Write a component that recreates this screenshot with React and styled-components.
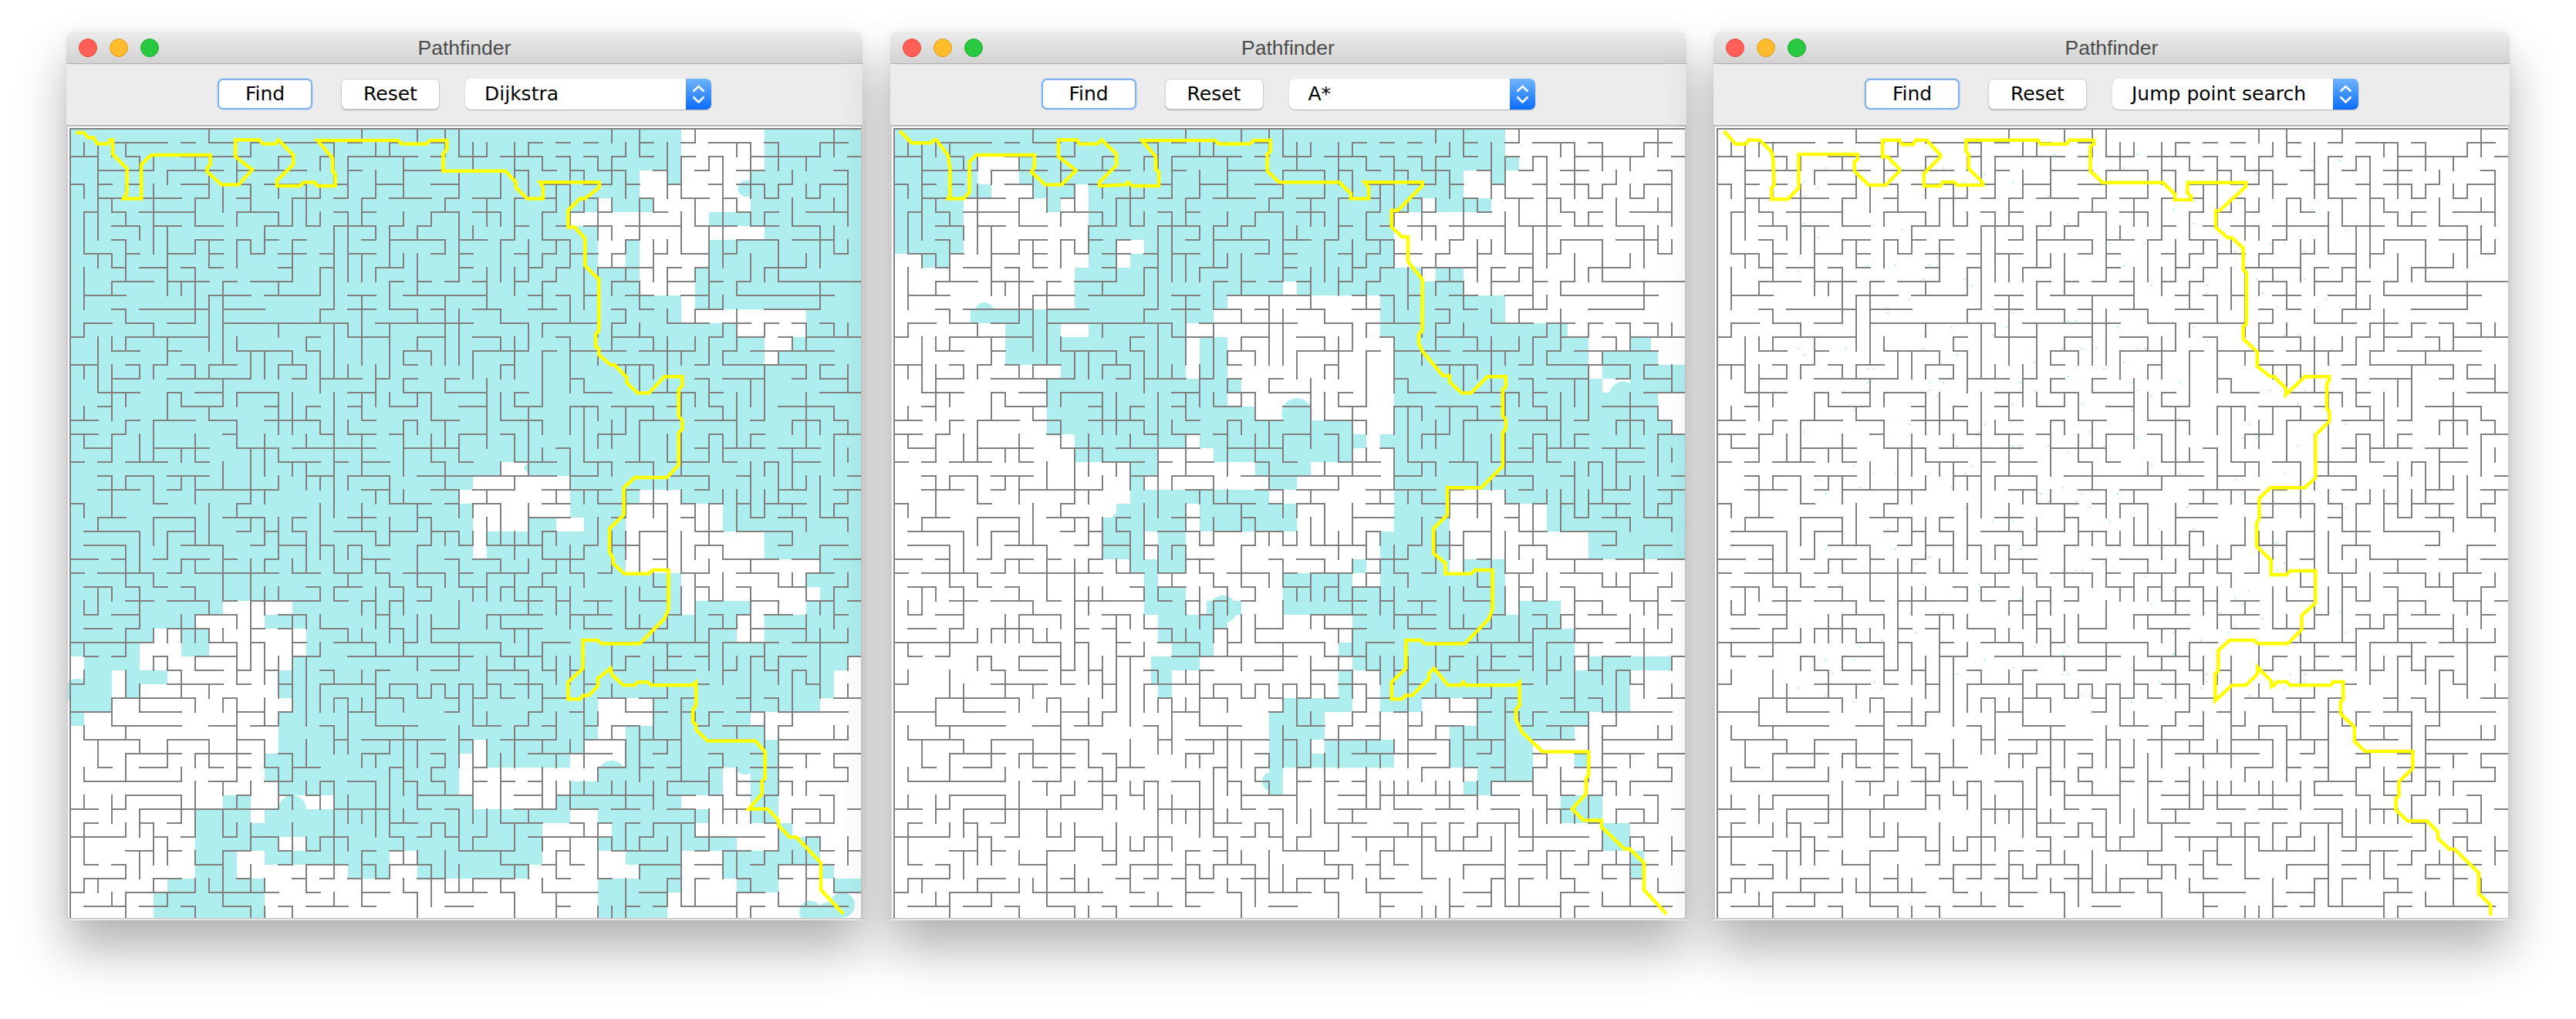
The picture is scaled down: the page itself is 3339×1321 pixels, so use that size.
import React from "react";
import styled, { createGlobalStyle } from "styled-components";

const CELL = 18;
const OFFSET = 3;
const SIZE = 57;
const CYAN = "#afeeee";

const GlobalStyle = createGlobalStyle`
  html, body {
    margin: 0;
    padding: 0;
    background: #fff;
    overflow: hidden;
  }
`;

const Page = styled.div`
  display: flex;
  gap: 35.5px;
  width: 3339px;
  height: 1321px;
  padding: 40px 0 0 86px;
  box-sizing: border-box;
`;

const Window = styled.div`
  display: flex;
  flex-direction: column;
  width: 1032px;
  height: 1153px;
  flex: none;
  background: #fff;
  border-radius: 11px 11px 0 0;
  box-shadow: 0 38px 64px rgba(0, 0, 0, 0.3), 0 0 12px rgba(0, 0, 0, 0.05);
`;

const TitleBar = styled.div`
  display: grid;
  grid-template-columns: 1fr auto 1fr;
  align-items: center;
  height: 43px;
  box-sizing: border-box;
  padding: 0 16px;
  background: linear-gradient(#ececec, #d2d2d2);
  border-top: 1px solid #f4f4f4;
  border-bottom: 1px solid #b2b2b2;
  border-radius: 11px 11px 0 0;
`;

const Lights = styled.div`
  display: flex;
  gap: 16px;
`;

const Light = styled.span`
  width: 24px;
  height: 24px;
  box-sizing: border-box;
  border-radius: 50%;
  background: ${(p) => p.$fill};
  border: 1px solid ${(p) => p.$edge};
`;

const Title = styled.div`
  font-family: "Liberation Sans", Arial, sans-serif;
  font-size: 26.5px;
  color: #4c4c4c;
  line-height: 30px;
`;

const Toolbar = styled.div`
  display: flex;
  align-items: center;
  justify-content: center;
  height: 81px;
  box-sizing: border-box;
  padding-bottom: 2px;
  background: #ececec;
  border-bottom: 2px solid #b9b9b9;
`;

const Button = styled.div`
  display: flex;
  align-items: center;
  justify-content: center;
  width: ${(p) => p.$width}px;
  height: 40px;
  box-sizing: border-box;
  margin-right: ${(p) => p.$after}px;
  background: #fff;
  border-radius: 7px;
  border: ${(p) => (p.$focused ? "2px solid #7fb1ee" : "1px solid #cfcfcf")};
  box-shadow: ${(p) => (p.$focused ? "0 0 2px #8fbaf0" : "0 1px 1px #b0b0b0")};
  font-family: "DejaVu Sans", sans-serif;
  font-size: 25px;
  color: #000;
`;

const Select = styled.div`
  display: flex;
  width: 319px;
  height: 40px;
  border-radius: 7px;
  background: #fff;
  box-shadow: 0 1px 1px #b0b0b0, 0 0 1px #c4c4c4;
`;

const SelectLabel = styled.div`
  flex: 1;
  padding-left: 25px;
  font-family: "DejaVu Sans", sans-serif;
  font-size: 25px;
  line-height: 40px;
  color: #000;
`;

const Stepper = styled.div`
  width: 33px;
  height: 40px;
  border-radius: 0 7px 7px 0;
  background: linear-gradient(#6fb4fb, #0b6dff);
`;

const Canvas = styled.div`
  height: 1026px;
  margin-bottom: 1px;
  background: #fff;
  border: 2px solid #cbcbcb;
  border-top: 0;
`;

const MazeSvg = styled.svg`
  display: block;
  width: 1028px;
  height: 1026px;
`;

// seeded random so every window draws the same maze
const rng = (seed) => () => {
  seed = (seed + 0x6d2b79f5) | 0;
  let t = Math.imul(seed ^ (seed >>> 15), 1 | seed);
  t = (t + Math.imul(t ^ (t >>> 7), 61 | t)) ^ t;
  return ((t ^ (t >>> 14)) >>> 0) / 4294967296;
};

const buildWalls = () => {
  const random = rng(2024);
  const edges = [];
  // runs along a line share some weight, that keeps walls a bit longer
  const runWeights = (count) => {
    const out = [];
    while (out.length < count) {
      const len = 2 + Math.floor(random() * 4);
      const value = random() * 0.4;
      for (let i = 0; i < len; i++) out.push(value);
    }
    return out;
  };
  for (let line = 0; line < SIZE; line++) {
    const across = runWeights(SIZE);
    const along = runWeights(SIZE);
    for (let i = 0; i < SIZE; i++) {
      if (line < SIZE - 1) edges.push([i, line, 0, across[i] + random()]);
      if (line < SIZE - 1) edges.push([line, i, 1, along[i] + random()]);
    }
  }
  edges.sort((a, b) => a[3] - b[3]);
  const parent = Array.from({ length: SIZE * SIZE }, (_, i) => i);
  const find = (i) => {
    while (parent[i] !== i) {
      parent[i] = parent[parent[i]];
      i = parent[i];
    }
    return i;
  };
  const walls = [];
  edges.forEach((edge) => {
    const [r, c, down] = edge;
    const a = find(r * SIZE + c);
    const b = find(down ? (r + 1) * SIZE + c : r * SIZE + c + 1);
    if (a !== b) parent[a] = b;
    else walls.push(edge);
  });
  // open up some dead end stubs, the reference has loops
  const ends = (edge) => {
    const [r, c, down] = edge;
    return down ? [`${r + 1}:${c}`, `${r + 1}:${c + 1}`] : [`${r}:${c + 1}`, `${r + 1}:${c + 1}`];
  };
  const degree = {};
  walls.forEach((w) => ends(w).forEach((k) => (degree[k] = (degree[k] || 0) + 1)));
  let d = `M${OFFSET} ${OFFSET}H${OFFSET + SIZE * CELL}M${OFFSET} ${OFFSET}V${OFFSET + SIZE * CELL}`;
  walls.forEach((w) => {
    const [r, c, down] = w;
    const [p, q] = ends(w);
    if ((degree[p] === 1 || degree[q] === 1) && random() < 0.3) {
      degree[p] -= 1;
      degree[q] -= 1;
      return;
    }
    if (down) {
      d += `M${OFFSET + c * CELL} ${OFFSET + (r + 1) * CELL}h${CELL}`;
    } else {
      d += `M${OFFSET + (c + 1) * CELL} ${OFFSET + r * CELL}v${CELL}`;
    }
  });
  return d;
};

const WALLS = buildWalls();

const buildSpecks = () => {
  const random = rng(77);
  const out = [];
  for (let i = 0; i < 230; i++) {
    out.push([
      OFFSET + Math.floor(random() * 40 + 6) * CELL + (random() < 0.5 ? -4 : 4),
      OFFSET + Math.floor(random() * 40 + 2) * CELL + (random() < 0.5 ? -4 : 4),
    ]);
  }
  return out;
};

const SPECKS = buildSpecks();

// cells not reached by Dijkstra: [col, row, endCol, endRow]
const DIJKSTRA_WHITE = [
  [44, 0, 50, 3], [44, 3, 49, 6], [41, 3, 43, 5], [43, 4, 44, 5], [42, 5, 44, 6], [38, 5, 39, 6],
  [36, 6, 46, 7], [38, 7, 50, 8], [38, 8, 40, 10], [41, 8, 46, 10], [41, 10, 45, 12], [44, 12, 45, 13],
  [44, 13, 53, 14], [48, 14, 53, 15], [50, 15, 52, 16], [50, 16, 51, 17],
  [31, 24, 33, 25], [29, 25, 36, 26], [28, 26, 36, 27], [29, 27, 36, 28], [29, 28, 33, 29], [35, 28, 37, 29], [29, 29, 30, 31],
  [41, 26, 44, 27], [40, 27, 47, 29], [40, 29, 50, 31], [40, 31, 54, 32], [44, 32, 53, 33], [44, 33, 54, 34],
  [44, 34, 45, 35], [49, 34, 53, 35], [48, 35, 50, 37],
  [11, 34, 16, 35], [9, 35, 14, 36], [6, 36, 8, 38], [10, 36, 17, 38], [5, 37, 8, 38], [0, 38, 1, 40],
  [5, 38, 16, 39], [3, 39, 4, 41], [7, 39, 15, 40], [5, 40, 15, 41], [3, 41, 16, 42], [1, 42, 15, 43],
  [0, 43, 15, 45], [0, 45, 14, 47], [0, 47, 15, 48], [0, 48, 11, 49], [13, 48, 19, 49], [0, 49, 9, 54],
  [13, 49, 14, 50], [15, 51, 17, 52], [12, 52, 14, 53], [12, 53, 20, 54], [23, 52, 25, 54], [0, 54, 7, 55],
  [14, 54, 38, 55], [0, 55, 6, 57], [14, 55, 38, 57],
  [36, 49, 38, 50], [34, 50, 39, 51], [34, 51, 38, 52], [34, 52, 40, 53], [33, 53, 41, 54], [33, 54, 38, 57],
  [29, 44, 30, 45], [37, 44, 40, 45], [28, 45, 30, 46], [36, 45, 40, 46], [28, 46, 38, 47], [28, 47, 36, 48], [29, 48, 35, 49],
  [38, 41, 42, 43], [38, 43, 40, 44],
  [56, 38, 57, 39], [55, 39, 57, 41], [54, 41, 57, 42], [49, 42, 57, 43], [50, 43, 57, 44], [51, 44, 57, 50],
  [47, 46, 49, 48], [44, 48, 49, 49], [46, 49, 49, 50], [52, 49, 57, 51], [45, 50, 51, 51], [48, 51, 51, 52],
  [54, 51, 57, 53], [44, 52, 47, 54], [51, 53, 54, 54], [55, 53, 57, 54], [44, 54, 48, 55], [51, 54, 55, 55], [43, 55, 57, 57],
];

const DIJKSTRA_BUMPS = [
  [39, 46.5, 1], [16, 49, 1], [13.3, 56.6, 0.8], [53.3, 56.4, 0.8], [54.6, 56.6, 0.9], [55.6, 55.9, 0.9],
  [0.5, 40.5, 0.9], [16, 43, 1], [48.7, 4.3, 0.6], [46.5, 6.5, 0.5], [48.6, 45.7, 0.8], [33, 24.4, 0.3],
];

// cells reached by A*
const ASTAR_CYAN = [
  [0, 0, 44, 2], [0, 2, 6, 4], [9, 2, 45, 3], [9, 3, 41, 4], [43, 3, 44, 4], [0, 4, 7, 5], [10, 4, 13, 5], [14, 4, 41, 5],
  [0, 5, 5, 9], [11, 5, 12, 6], [14, 5, 38, 6], [39, 5, 43, 6], [14, 6, 36, 8], [14, 8, 16, 10], [18, 8, 36, 9], [2, 9, 4, 10],
  [17, 9, 36, 10], [13, 10, 38, 11], [39, 10, 41, 11], [13, 11, 28, 12], [29, 11, 41, 12], [13, 12, 24, 13], [35, 12, 44, 13],
  [5.5, 13, 13, 14], [13, 13, 23, 14], [35, 13, 44, 14], [8, 14, 12, 15], [14, 14, 21, 15], [35, 14, 48.5, 15],
  [8, 15, 21, 16], [22, 15, 24, 16], [36, 15, 50, 16], [53, 15, 54.5, 16], [8, 16, 21, 17], [22, 16, 24, 17], [36, 16, 50, 17], [51, 16, 55, 17],
  [12, 17, 21, 18], [22, 17, 24, 18], [36, 17, 50, 18], [51, 17, 57, 18], [11, 18, 25, 19], [36, 18, 51, 19], [53, 18, 57, 19],
  [11, 19, 24, 20], [36, 19, 52, 20], [53, 19, 55, 20], [11, 20, 26, 21], [28, 20, 30, 21], [36, 20, 55, 21],
  [11, 21, 33, 22], [36, 21, 56, 22], [13, 22, 21, 23], [22, 22, 34, 23], [35, 22, 57, 23], [13, 23, 19, 24], [23, 23, 33, 24], [36, 23, 57, 24],
  [17, 24, 19, 25], [26, 24, 30, 25], [36, 24, 57, 25], [17, 25, 18, 26], [27, 25, 29, 26], [36, 25, 57, 26],
  [17, 26, 27, 27], [36, 26, 40, 27], [44, 26, 57, 27], [16, 27, 21, 28], [22, 27, 29, 28], [36, 27, 40, 28], [47, 27, 57, 28],
  [15, 28, 21, 29], [22, 28, 29, 29], [36, 28, 40, 29], [47, 28, 57, 29], [15, 29, 18, 31], [19, 29, 21, 31], [35, 29, 40, 31], [50, 29, 57, 31],
  [17, 31, 21, 32], [33, 31, 34, 32], [35, 31, 40, 32], [41, 31, 44, 32], [18, 32, 19, 33], [28, 32, 33, 33], [35, 32, 44, 33],
  [18, 33, 21, 34], [28, 33, 44, 34], [18, 34, 21, 35], [22.5, 34, 25, 35], [28, 34, 44, 35], [45, 34, 48, 35],
  [19, 35, 24, 36], [33, 35, 48, 36], [19, 36, 23, 37], [33, 36, 49, 37], [20, 37, 23, 38], [32, 37, 49, 38],
  [18.5, 38, 22, 39], [33, 38, 49, 39], [50, 38, 56, 39], [18.5, 39, 20, 40], [32, 39, 33, 41], [35, 39, 53, 40], [19, 40, 20, 41], [35, 40, 53, 41],
  [28, 41, 33, 42], [35, 41, 38, 42], [42, 41, 53, 42], [27, 42, 31, 44], [42, 42, 50, 43], [40, 43, 49, 44],
  [27, 44, 30, 45], [31, 44, 36, 45], [40, 44, 46, 46], [27, 45, 36, 46], [49, 45, 50, 46], [27, 46, 28, 48], [42, 46, 46, 47], [41, 47, 43, 48],
  [48, 48, 51, 50], [51, 50, 53, 52], [53, 52, 54, 54],
];

const ASTAR_BUMPS = [[6.5, 13.2, 0.7], [52.5, 19.2, 1], [16.6, 28.6, 1.1], [23.7, 34.6, 1], [27.2, 47, 0.7], [29, 20.5, 1.1]];

// path points as read from the reference, in its magnified crop coordinates
const toPoints = (list, dx) => list.map(([x, y]) => `${(x * 0.6633 + dx).toFixed(1)},${(y * 0.6633 - 4).toFixed(1)}`).join(" ");

const PATH_DIJKSTRA = toPoints(
  [[20,18],[35,18],[45,28],[55,28],[62,40],[82,40],[87,32],[92,32],[92,60],[120,88],[120,135],[113,147],[148,147],[148,80],[167,62],[283,62],[283,80],[277,88],[277,95],[305,120],[338,120],[365,90],[360,87],[332,65],[332,32],[378,32],[386,40],[410,40],[416,32],[445,62],[445,80],[413,112],[413,122],[458,122],[465,115],[486,115],[492,122],[527,122],[527,100],[522,93],[522,68],[492,33],[650,33],[657,40],[705,40],[712,33],[745,33],[745,50],[738,60],[738,93],[860,93],[880,115],[880,125],[902,147],[933,147],[933,125],[927,115],[1043,115],[1043,125],[1015,147],[1005,147],[982,170],[982,203],[995,203],[1015,225],[1015,278],[1042,305],[1042,405],[1036,412],[1036,437],[1042,440],[1042,452],[1065,472],[1073,472],[1097,497],[1097,507],[1118,527],[1140,527],[1170,495],[1205,495],[1205,513],[1198,520],[1198,572],[1205,580],[1205,597],[1198,605],[1198,668],[1175,692],[1112,692],[1091,712],[1091,765],[1063,792],[1063,838],[1070,850],[1070,860],[1092,880],[1140,880],[1147,873],[1178,873],[1178,950],[1170,968],[1122,1017],[1048,1017],[1040,1010],[1011,1010],[1011,1065],[982,1092],[982,1125],[1005,1125],[1012,1118],[1022,1118],[1040,1100],[1040,1085],[1065,1065],[1068,1078],[1090,1098],[1112,1098],[1118,1092],[1138,1092],[1145,1098],[1225,1098],[1232,1092],[1232,1138],[1226,1145],[1226,1170],[1232,1175],[1232,1185],[1255,1207],[1348,1207],[1367,1228],[1367,1280],[1361,1285],[1361,1310],[1335,1340],[1372,1340],[1393,1362],[1393,1372],[1415,1395],[1428,1395],[1476,1445],[1476,1498],[1520,1545]],
  -3
);

const PATH_ASTAR = toPoints(
  [[24,15],[47,38],[85,38],[90,32],[95,32],[118,62],[122,88],[122,140],[118,147],[148,147],[160,135],[160,75],[173,62],[287,62],[287,85],[281,95],[308,120],[340,120],[368,92],[360,85],[334,65],[334,32],[370,32],[375,40],[410,40],[418,32],[447,60],[447,82],[414,115],[414,122],[465,120],[470,115],[478,122],[530,122],[530,95],[524,90],[524,65],[497,33],[640,33],[647,40],[708,40],[715,33],[748,33],[748,55],[742,60],[742,93],[765,115],[883,115],[905,137],[905,147],[940,147],[940,125],[932,115],[1045,115],[1045,122],[997,170],[985,170],[985,203],[1006,222],[1017,222],[1017,270],[1045,305],[1045,405],[1038,412],[1038,430],[1045,445],[1085,493],[1098,493],[1098,505],[1122,527],[1140,527],[1172,495],[1208,495],[1208,515],[1202,520],[1202,572],[1208,578],[1208,597],[1202,605],[1202,670],[1160,712],[1094,712],[1094,765],[1067,792],[1067,840],[1090,860],[1090,880],[1140,880],[1148,873],[1182,873],[1182,950],[1175,968],[1128,1017],[1050,1017],[1042,1010],[1013,1010],[1013,1065],[985,1092],[985,1125],[1005,1125],[1012,1118],[1025,1118],[1058,1085],[1058,1075],[1068,1065],[1095,1098],[1120,1098],[1125,1092],[1130,1098],[1228,1098],[1235,1092],[1235,1138],[1228,1145],[1228,1165],[1240,1190],[1280,1228],[1370,1228],[1370,1275],[1365,1280],[1365,1310],[1338,1340],[1360,1362],[1395,1362],[1395,1375],[1440,1418],[1450,1418],[1478,1445],[1478,1498],[1522,1545]],
  -5.5
);

// the jump point crop is 1.5x wide and 3x tall, second half starts 516px lower
const jpsUpper = [[22,30],[45,80],[65,80],[70,65],[92,65],[115,110],[118,140],[120,240],[115,250],[115,295],[147,295],[168,250],[168,120],[283,120],[283,140],[277,150],[277,185],[305,240],[338,240],[365,185],[365,178],[342,130],[332,130],[332,65],[365,65],[370,82],[392,82],[397,65],[418,65],[445,122],[445,130],[413,195],[413,243],[445,243],[450,228],[472,228],[478,240],[528,240],[528,230],[500,175],[500,120],[495,108],[495,65],[636,65],[640,80],[692,80],[697,65],[745,65],[745,80],[738,90],[738,185],[762,230],[880,230],[903,275],[903,297],[935,297],[935,285],[928,270],[928,230],[1042,230],[1042,245],[990,340],[983,340],[983,405],[1007,445],[1015,445],[1037,485],[1037,570],[1043,580],[1043,780],[1037,790],[1037,838],[1064,888],[1064,945],[1090,985],[1097,985],[1120,1030],[1120,1055],[1157,985],[1205,985],[1205,1000],[1200,1010],[1200,1110],[1205,1120],[1205,1158],[1178,1212],[1178,1378],[1157,1417],[1090,1417],[1068,1458],[1068,1535],[1063,1555]];
const jpsLower = [[1063,0],[1063,85],[1091,138],[1091,195],[1122,195],[1128,180],[1178,180],[1178,305],[1151,353],[1151,408],[1124,463],[1065,463],[1058,450],[1010,450],[988,490],[988,570],[982,580],[982,685],[1015,625],[1042,625],[1065,580],[1065,555],[1092,610],[1092,630],[1098,625],[1102,612],[1122,612],[1128,625],[1208,625],[1212,612],[1232,612],[1232,680],[1227,690],[1227,735],[1254,788],[1254,843],[1275,882],[1368,882],[1368,948],[1341,1000],[1341,1055],[1335,1065],[1335,1110],[1358,1153],[1396,1153],[1417,1195],[1417,1220],[1440,1263],[1450,1263],[1497,1355],[1497,1435],[1520,1480],[1520,1520]];

const PATH_JPS = [
  ...jpsUpper.map(([x, y]) => `${(x * 0.6633 - 3).toFixed(1)},${(y / 3 - 4).toFixed(1)}`),
  ...jpsLower.map(([x, y]) => `${(x * 0.6633 - 3).toFixed(1)},${(y / 3 + 516).toFixed(1)}`),
].join(" ");

const cellRect = ([c1, r1, c2, r2], fill) => (
  <rect
    key={`${c1}-${r1}-${c2}-${r2}`}
    x={OFFSET + c1 * CELL}
    y={OFFSET + r1 * CELL}
    width={(c2 - c1) * CELL}
    height={(r2 - r1) * CELL}
    fill={fill}
  />
);

const bump = ([c, r, size], i) => (
  <circle key={i} cx={OFFSET + c * CELL} cy={OFFSET + r * CELL} r={size * CELL} fill={CYAN} />
);

function Maze({ path, base, rects = [], rectFill, bumps = [], specks = false }) {
  return (
    <MazeSvg viewBox="0 0 1028 1026">
      <rect width="1028" height="1026" fill="#fff" />
      {base && <rect x={OFFSET} y={OFFSET} width="1025" height="1023" fill={base} />}
      {rects.map((r) => cellRect(r, rectFill))}
      {bumps.map(bump)}
      {specks && SPECKS.map(([x, y], i) => <rect key={i} x={x} y={y} width="2" height="2" fill={CYAN} />)}
      <path d={WALLS} fill="none" stroke="#808080" strokeWidth="2" strokeLinecap="square" shapeRendering="crispEdges" />
      <polyline points={path} fill="none" stroke="#ffff00" strokeWidth="4.5" strokeLinejoin="miter" />
    </MazeSvg>
  );
}

function Chevrons() {
  return (
    <svg width="33" height="40" viewBox="0 0 33 40" style={{ display: "block" }}>
      <path d="M9.5 16.5L16.5 10L23.5 16.5M9.5 23.5L16.5 30.5L23.5 23.5" fill="none" stroke="#fff" strokeWidth="2.6" />
    </svg>
  );
}

function PathWindow({ algorithm, children }) {
  return (
    <Window>
      <TitleBar>
        <Lights>
          <Light $fill="#ff5f57" $edge="#e5483f" />
          <Light $fill="#ffbd2e" $edge="#e09e1a" />
          <Light $fill="#28c940" $edge="#1fa92f" />
        </Lights>
        <Title>Pathfinder</Title>
      </TitleBar>
      <Toolbar>
        <Button $width={123} $after={37} $focused>Find</Button>
        <Button $width={128} $after={33}>Reset</Button>
        <Select>
          <SelectLabel>{algorithm}</SelectLabel>
          <Stepper>
            <Chevrons />
          </Stepper>
        </Select>
      </Toolbar>
      <Canvas>{children}</Canvas>
    </Window>
  );
}

export default function App() {
  return (
    <>
      <GlobalStyle />
      <Page>
        <PathWindow algorithm="Dijkstra">
          <Maze path={PATH_DIJKSTRA} base={CYAN} rects={DIJKSTRA_WHITE} rectFill="#fff" bumps={DIJKSTRA_BUMPS} />
        </PathWindow>
        <PathWindow algorithm="A*">
          <Maze path={PATH_ASTAR} rects={ASTAR_CYAN} rectFill={CYAN} bumps={ASTAR_BUMPS} />
        </PathWindow>
        <PathWindow algorithm="Jump point search">
          <Maze path={PATH_JPS} specks />
        </PathWindow>
      </Page>
    </>
  );
}
